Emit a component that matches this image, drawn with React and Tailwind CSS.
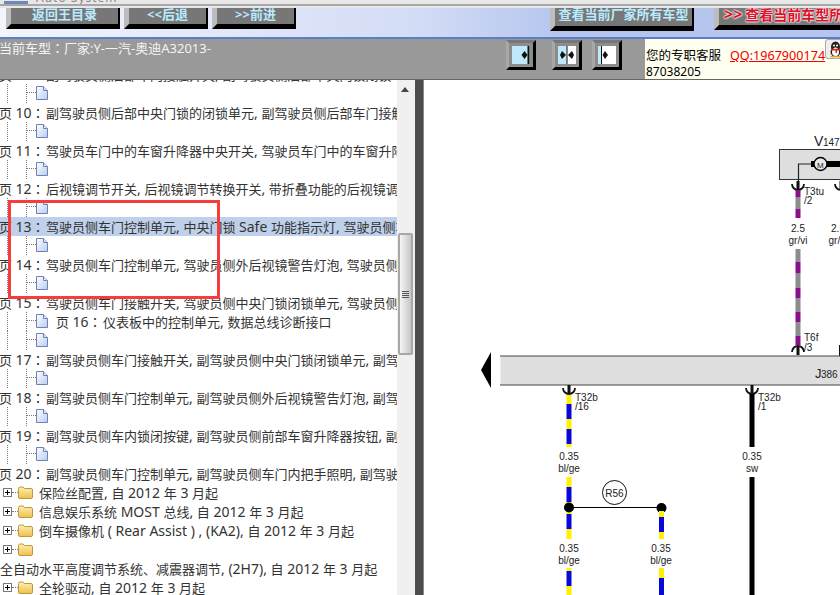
const font = "[font-family:'Noto_Sans','Noto_Sans_CJK_SC',sans-serif]";

const PAGE_ROWS = {
  9: "副驾驶员侧后部车门接触开关, 副驾驶员侧后部中央门锁闭锁单元, 副驾驶员侧",
  10: "副驾驶员侧后部中央门锁的闭锁单元, 副驾驶员侧后部车门接触开关",
  11: "驾驶员车门中的车窗升降器中央开关, 驾驶员车门中的车窗升降器开关",
  12: "后视镜调节开关, 后视镜调节转换开关, 带折叠功能的后视镜调节开关",
  13: "驾驶员侧车门控制单元, 中央门锁 Safe 功能指示灯, 驾驶员侧车门",
  14: "驾驶员侧车门控制单元, 驾驶员侧外后视镜警告灯泡, 驾驶员侧车门",
  15: "驾驶员侧车门接触开关, 驾驶员侧中央门锁闭锁单元, 驾驶员侧车门",
  17: "副驾驶员侧车门接触开关, 副驾驶员侧中央门锁闭锁单元, 副驾驶员侧",
  18: "副驾驶员侧车门控制单元, 副驾驶员侧外后视镜警告灯泡, 副驾驶员侧",
  19: "副驾驶员侧车内锁闭按键, 副驾驶员侧前部车窗升降器按钮, 副驾驶员侧",
  20: "副驾驶员侧车门控制单元, 副驾驶员侧车门内把手照明, 副驾驶员侧",
};

// latin runs sit a bit larger than the CJK around them in the original
function T({ text }) {
  return text.split(/([\x00-\x7f]+)/).map((part, i) =>
    i % 2 ? (
      <span key={i} className="text-[14px]">
        {part}
      </span>
    ) : (
      part
    )
  );
}

function Colon() {
  return <span className="[font-family:'Noto_Sans_CJK_TC',sans-serif]">：</span>;
}

function PageLabel({ n }) {
  return (
    <span className="inline-block w-[47px]">
      页 <T text={String(n)} />
      <Colon />
    </span>
  );
}

function PageIcon() {
  return (
    <svg width="12" height="14" viewBox="0 0 12 14" className="shrink-0">
      <defs>
        <linearGradient id="pg" x1="0" y1="0" x2="1" y2="1">
          <stop offset="0" stopColor="#ffffff" />
          <stop offset="1" stopColor="#b9cdf0" />
        </linearGradient>
      </defs>
      <path d="M0.5 0.5H7.5L11.5 4.5V13.5H0.5Z" fill="url(#pg)" stroke="#6f82b8" />
      <path d="M7.5 0.5V4.5H11.5" fill="#dfe8f8" stroke="#6f82b8" />
    </svg>
  );
}

function FolderIcon() {
  return (
    <svg width="15" height="13" viewBox="0 0 15 13" className="shrink-0">
      <defs>
        <linearGradient id="fd" x1="0" y1="0" x2="0" y2="1">
          <stop offset="0" stopColor="#fdf0b0" />
          <stop offset="1" stopColor="#eec050" />
        </linearGradient>
      </defs>
      <path
        d="M0.5 2.5Q0.5 1 2 1H5L6.5 2.5H13Q14.5 2.5 14.5 4V11Q14.5 12.5 13 12.5H2Q0.5 12.5 0.5 11Z"
        fill="url(#fd)"
        stroke="#c09a38"
      />
    </svg>
  );
}

function IconRow({ children }) {
  return (
    <div className="flex h-[19px] pl-[7px]">
      <div className="w-[19px] border-l border-dotted border-[#777]" />
      <div className="w-[10px] border-l border-dotted border-[#777]">
        <div className="h-[9px] border-b border-dotted border-[#777]" />
      </div>
      <div className="pt-[2px]">
        <PageIcon />
      </div>
      {children}
    </div>
  );
}

function PageRow({ n, active }) {
  return (
    <div
      className={`h-[19px] -ml-px whitespace-nowrap text-[13px] leading-[19px] text-[#333] ${
        active ? "bg-[#bfd0ea]" : ""
      }`}
    >
      <PageLabel n={n} />
      <T text={PAGE_ROWS[n]} />
    </div>
  );
}

function FolderRow({ text = "" }) {
  return (
    <div className="flex h-[19px] items-center whitespace-nowrap pl-[3px] text-[13px] leading-[19px] text-[#333]">
      <div className="flex h-[9px] w-[9px] shrink-0 items-center justify-center border border-[#777] bg-white">
        <div className="relative h-px w-[5px] bg-black">
          <div className="absolute left-[2px] top-[-2px] h-[5px] w-px bg-black" />
        </div>
      </div>
      <div className="w-[6px] shrink-0 border-b border-dotted border-[#777]" />
      <FolderIcon />
      <div className="pl-[6px]">
        <T text={text} />
      </div>
    </div>
  );
}

function Tree() {
  return (
    <div className="w-[397px] shrink-0 overflow-hidden bg-white">
      <div className="-mt-[15px]">
        <PageRow n={9} />
        <IconRow />
        <PageRow n={10} />
        <IconRow />
        <PageRow n={11} />
        <IconRow />
        <PageRow n={12} />
        <IconRow />
        <PageRow n={13} active />
        <IconRow />
        <PageRow n={14} />
        <IconRow />
        <PageRow n={15} />
        <IconRow>
          <div className="pl-[8px] whitespace-nowrap text-[13px] leading-[19px] text-[#333]">
            <PageLabel n={16} />
            <T text="仪表板中的控制单元, 数据总线诊断接口" />
          </div>
        </IconRow>
        <IconRow />
        <PageRow n={17} />
        <IconRow />
        <PageRow n={18} />
        <IconRow />
        <PageRow n={19} />
        <IconRow />
        <PageRow n={20} />
        <FolderRow text="保险丝配置, 自 2012 年 3 月起" />
        <FolderRow text="信息娱乐系统 MOST 总线, 自 2012 年 3 月起" />
        <FolderRow text="倒车摄像机 ( Rear Assist ) , (KA2), 自 2012 年 3 月起" />
        <FolderRow />
        <div className="h-[19px] whitespace-nowrap text-[13px] leading-[19px] text-[#333]">
          <T text="全自动水平高度调节系统、减震器调节, (2H7), 自 2012 年 3 月起" />
        </div>
        <FolderRow text="全轮驱动, 自 2012 年 3 月起" />
      </div>
    </div>
  );
}

function Scrollbar() {
  return (
    <div className="flex w-[18px] shrink-0 flex-col items-center bg-[#f0f0f0] pr-[2px]">
      <svg width="8" height="5" viewBox="0 0 8 5" className="mt-[7px]">
        <path d="M4 0L8 5H0Z" fill="#444" />
      </svg>
      <div className="mt-[141px] flex h-[122px] w-[15px] flex-col items-center justify-center gap-px rounded-[2px] border-2 border-[#a8a8a8] bg-gradient-to-r from-[#f6f6f6] to-[#c6c6c6]">
        <div className="h-px w-[7px] bg-[#555]" />
        <div className="h-px w-[7px] bg-[#555]" />
        <div className="h-px w-[7px] bg-[#555]" />
        <div className="h-px w-[7px] bg-[#555]" />
      </div>
    </div>
  );
}

function NavButton({ className, children }) {
  return (
    <div
      className={`flex shrink-0 justify-center overflow-hidden whitespace-nowrap border-b-[5px] border-l-[5px] border-r-[2px] border-b-black border-l-[#bdbdbd] border-r-black bg-[#777] text-[13px] font-bold leading-[12px] text-[#b8ebff] ${className}`}
    >
      {children}
    </div>
  );
}

function SplitButton({ className, kind }) {
  return (
    <div
      className={`flex h-[30px] w-[30px] shrink-0 items-center justify-center border-[3px] border-b-black border-l-[#a8a8a8] border-r-black border-t-[#777] bg-[#8c8c8c] ${className}`}
    >
      <svg width="18" height="18" viewBox="0 0 18 18">
        {kind === "left" && (
          <>
            <rect width="18" height="18" fill="#bfe8fb" />
            <rect x="15.5" width="2" height="18" fill="#111" />
            <path d="M12.5 5L15.5 9L12.5 13L9.5 9Z" fill="#111" />
          </>
        )}
        {kind === "both" && (
          <>
            <rect width="9" height="18" fill="#bfe8fb" />
            <rect x="9" width="9" height="18" fill="#fff" />
            <rect x="8.5" width="1" height="18" fill="#111" />
            <path d="M4 5L8 9L4 13L2 9Z M14 5L16 9L14 13L10 9Z" fill="#111" />
          </>
        )}
        {kind === "right" && (
          <>
            <rect width="18" height="18" fill="#fff" />
            <rect width="3" height="18" fill="#bfe8fb" />
            <rect x="3" width="1" height="18" fill="#111" />
            <path d="M7 5L10 9L7 13L4.5 9Z" fill="#111" />
          </>
        )}
      </svg>
    </div>
  );
}

function QqIcon() {
  return (
    <div className="flex h-[20px] w-[20px] shrink-0 items-center justify-center self-start rounded-[3px] border border-[#aaa] bg-[#eeeeee]">
      <svg width="15" height="17" viewBox="0 0 15 17">
        <ellipse cx="7.5" cy="6" rx="4.5" ry="5.5" fill="#222" />
        <ellipse cx="7.5" cy="11" rx="5" ry="4.5" fill="#222" />
        <ellipse cx="7.5" cy="11" rx="3.5" ry="4" fill="#fff" />
        <circle cx="6" cy="4.5" r="1" fill="#fff" />
        <circle cx="9" cy="4.5" r="1" fill="#fff" />
        <path d="M6 6.2H9L7.5 7.6Z" fill="#f5b400" />
        <path d="M3 8H12V9.5H9V12H7.5V9.5H3Z" fill="#e02020" />
        <path d="M2.5 15H6.5V16.5H2.5Z M8.5 15H12.5V16.5H8.5Z" fill="#f5a800" />
      </svg>
    </div>
  );
}

function Wire({ x, w = 5, segs }) {
  return segs.map(([y1, y2, c]) => (
    <rect key={`${x}-${y1}`} x={x - w / 2} y={y1} width={w} height={y2 - y1} fill={c} />
  ));
}

function Plug({ x, y, flip }) {
  return (
    <g stroke="#111" fill="none">
      <path
        d={flip ? `M${x - 6} ${y + 6}A6 6 0 0 1 ${x + 6} ${y + 6}` : `M${x - 6} ${y}A6 6 0 0 0 ${x + 6} ${y}`}
        strokeWidth="1.8"
      />
      <rect x={x - 1.5} y={flip ? y + 1 : y - 3} width="3" height="8" fill="#111" stroke="none" />
    </g>
  );
}

const Y = "#fff200";
const B = "#0808d8";
const P = "#8a0f8a";
const G = "#8c8c8c";
const K = "#000";

function Diagram() {
  return (
    <svg viewBox="424 80 416 515" className="h-full w-[416px] bg-white" fontFamily="'Liberation Sans',sans-serif" fontSize="10" fill="#222">
      {/* V147 motor */}
      <text x="814" y="146" fontSize="14">V</text>
      <text x="823" y="146" fontSize="10">147</text>
      <rect x="779.5" y="149.5" width="70" height="30" fill="#dedede" stroke="#333" />
      <path d="M811 164H798.5V186" fill="none" stroke="#222" strokeWidth="1.2" />
      <rect x="811" y="161" width="4" height="6" fill="#000" />
      <rect x="826" y="161" width="14" height="6" fill="#000" />
      <circle cx="820.5" cy="164" r="6.5" fill="#e8e8e8" stroke="#000" strokeWidth="1.4" />
      <text x="817" y="168" fontSize="8">M</text>
      <Plug x={798} y={184} />
      <Plug x={841} y={184} />
      <Wire x={798} segs={[[190, 197, P], [197, 209, G], [209, 218, P]]} />
      <text x="804" y="195">T3tu</text>
      <text x="804" y="204">/2</text>
      <text x="798" y="232" textAnchor="middle">2.5</text>
      <text x="798" y="244" textAnchor="middle">gr/vi</text>
      <text x="838" y="232" textAnchor="middle">2.5</text>
      <text x="838" y="244" textAnchor="middle">gr/vi</text>
      <Wire
        x={798}
        segs={[[249, 262, G], [262, 273, P], [273, 288, G], [288, 298, P], [298, 312, G], [312, 322, P], [322, 336, G], [336, 345, P]]}
      />
      <text x="804" y="341">T6f</text>
      <text x="804" y="351">/3</text>
      <Plug x={798} y={346} flip />
      <rect x="839" y="345" width="1" height="11" fill="#111" />

      {/* J386 bus */}
      <rect x="500.5" y="356" width="350" height="29" fill="#dedede" />
      <path d="M500 356H840M500 385H840" stroke="#444" />
      <path d="M491 352V388L481 370Z" fill="#000" />
      <text x="815" y="378" fontSize="13">J</text>
      <text x="821" y="378" fontSize="10">386</text>

      {/* left drop */}
      <Plug x={569} y={388} />
      <Wire x={569} segs={[[395, 404, Y], [404, 419, B], [419, 429, Y], [429, 444, B], [444, 447, Y]]} />
      <text x="575" y="401">T32b</text>
      <text x="575" y="410">/16</text>
      <text x="569" y="460" textAnchor="middle">0.35</text>
      <text x="569" y="472" textAnchor="middle">bl/ge</text>
      <Wire x={569} segs={[[477, 487, Y], [487, 502, B], [502, 514, Y], [514, 529, B], [529, 539, Y]]} />
      <text x="569" y="552" textAnchor="middle">0.35</text>
      <text x="569" y="564" textAnchor="middle">bl/ge</text>
      <Wire x={569} segs={[[568, 571, Y], [571, 586, B], [586, 595, Y]]} />

      {/* R56 splice */}
      <path d="M569 507.5H661" stroke="#000" strokeWidth="1.2" />
      <circle cx="569" cy="507.5" r="5" fill="#000" />
      <circle cx="661.5" cy="508" r="5" fill="#000" />
      <circle cx="614.5" cy="492.5" r="12" fill="#fff" stroke="#111" />
      <text x="614.5" y="497" textAnchor="middle">R56</text>
      <Wire x={661.5} segs={[[511, 517, Y], [517, 532, B], [532, 539, Y]]} />
      <text x="661" y="552" textAnchor="middle">0.35</text>
      <text x="661" y="564" textAnchor="middle">bl/ge</text>
      <Wire x={661.5} segs={[[568, 578, Y], [578, 595, B]]} />

      {/* black drop */}
      <Plug x={752} y={388} />
      <Wire x={752} segs={[[394, 447, K]]} />
      <text x="758" y="401">T32b</text>
      <text x="758" y="410">/1</text>
      <text x="752" y="460" textAnchor="middle">0.35</text>
      <text x="752" y="472" textAnchor="middle">sw</text>
      <Wire x={752} segs={[[477, 595, K]]} />
    </svg>
  );
}

export default function App() {
  return (
    <div className={`relative flex h-[595px] w-[840px] flex-col overflow-hidden bg-white ${font}`}>
      {/* window title strip, mostly scrolled off */}
      <div className="h-[8px] shrink-0 overflow-hidden bg-[#e8e8e8]">
        <div className="flex h-[4px] items-end gap-[8px] overflow-hidden pl-[4px]">
          <div className="h-[3px] w-[24px] shrink-0 bg-[#6f86b8]" />
          <div className="whitespace-nowrap text-[12px] leading-[12px] tracking-[1px] text-[#888]">Auto System</div>
        </div>
        <div className="h-[2px] bg-[#a8a8a8]" />
      </div>

      {/* nav strip */}
      <div className="flex h-[29px] shrink-0 bg-gradient-to-r from-[#f2f5fc] from-[0%] via-[#d3dcf6] via-[50%] to-[#b5c5ed] to-[67%] pl-[6px]">
        <NavButton className="h-[21px] w-[114px]">返回王目录</NavButton>
        <NavButton className="ml-[4px] h-[21px] w-[84px]">&lt;&lt;后退</NavButton>
        <NavButton className="ml-[4px] h-[21px] w-[84px]">&gt;&gt;前进</NavButton>
        <NavButton className="ml-[254px] h-[23px] w-[144px]">查看当前厂家所有车型</NavButton>
        <div className="ml-[20px] flex h-[22px] w-[140px] shrink-0 justify-start overflow-hidden whitespace-nowrap border-b-[5px] border-l-[5px] border-b-black border-l-[#bdbdbd] bg-[#777] pl-[5px] text-[14px] font-bold leading-[13px] text-[#e0102a] [text-shadow:0_0_2px_#fff,0_0_2px_#fff,0_0_2px_#fff]">
          <span className="mr-[3px] text-[16px]">&gt;&gt;</span>
          查看当前车型所有
        </div>
      </div>
      <div className="h-[2px] shrink-0 bg-[#5a7ec8]" />

      {/* model bar */}
      <div className="flex h-[41px] shrink-0 border-b border-[#666] bg-[#999]">
        <div className="w-[504px] shrink-0 -ml-[1px] pt-[1px] whitespace-nowrap text-[13px] leading-[16px] text-[#f4f4f4]">
          当前车型
          <Colon />
          厂家:Y-一汽-奥迪A32013-
        </div>
        <SplitButton className="ml-[3px] mt-px" kind="left" />
        <SplitButton className="ml-[16px] mt-px" kind="both" />
        <SplitButton className="ml-[10px] mt-px" kind="right" />
        <div className="ml-[23px] flex-1 overflow-hidden bg-[#fffff0] pl-px text-[12.5px] leading-[16px] text-black">
          <div className="flex h-[25px] items-end whitespace-nowrap">
            <span className="w-[84px] shrink-0">您的专职客服</span>
            <span className="text-[12.6px] leading-[17px] text-[#f00000] underline">QQ:1967900174</span>
            <QqIcon />
          </div>
          <div className="text-[12px]">87038205</div>
        </div>
      </div>

      {/* tree + diagram */}
      <div className="flex min-h-0 flex-1">
        <Tree />
        <Scrollbar />
        <div className="w-[9px] shrink-0 border-r border-[#8a8a8a] bg-[#4d4d4d]" />
        <Diagram />
      </div>

      {/* red annotation box */}
      <div className="pointer-events-none absolute left-[8px] top-[200px] h-[99px] w-[212px] border-[3px] border-[#f73c3c]" />
    </div>
  );
}
